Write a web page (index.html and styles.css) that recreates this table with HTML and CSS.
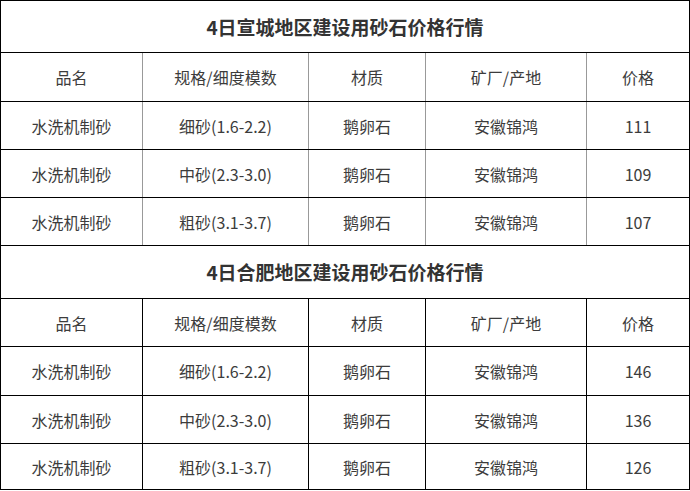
FILE: index.html
```html
<!DOCTYPE html>
<html lang="zh-CN">
<head>
<meta charset="utf-8">
<title>砂石价格行情</title>
<link rel="stylesheet" href="styles.css">
</head>
<body>
<table class="price-table">
  <colgroup>
    <col class="c1"><col class="c2"><col class="c3"><col class="c4"><col class="c5">
  </colgroup>
  <tbody class="sec sec-gray">
    <tr class="title-row"><td colspan="5">4日宣城地区建设用砂石价格行情</td></tr>
    <tr class="row head-row"><td>品名</td><td>规格/细度模数</td><td>材质</td><td>矿厂/产地</td><td>价格</td></tr>
    <tr class="row"><td>水洗机制砂</td><td>细砂(1.6-2.2)</td><td>鹅卵石</td><td>安徽锦鸿</td><td>111</td></tr>
    <tr class="row"><td>水洗机制砂</td><td>中砂(2.3-3.0)</td><td>鹅卵石</td><td>安徽锦鸿</td><td>109</td></tr>
    <tr class="row"><td>水洗机制砂</td><td>粗砂(3.1-3.7)</td><td>鹅卵石</td><td>安徽锦鸿</td><td>107</td></tr>
  </tbody>
  <tbody class="sec sec-black">
    <tr class="title-row title-second"><td colspan="5">4日合肥地区建设用砂石价格行情</td></tr>
    <tr class="row"><td>品名</td><td>规格/细度模数</td><td>材质</td><td>矿厂/产地</td><td>价格</td></tr>
    <tr class="row head-row"><td>水洗机制砂</td><td>细砂(1.6-2.2)</td><td>鹅卵石</td><td>安徽锦鸿</td><td>146</td></tr>
    <tr class="row"><td>水洗机制砂</td><td>中砂(2.3-3.0)</td><td>鹅卵石</td><td>安徽锦鸿</td><td>136</td></tr>
    <tr class="row last-row"><td>水洗机制砂</td><td>粗砂(3.1-3.7)</td><td>鹅卵石</td><td>安徽锦鸿</td><td>126</td></tr>
  </tbody>
</table>
</body>
</html>
```

FILE: styles.css
```css
html, body {
  margin: 0;
  padding: 0;
  background: #fff;
}

.price-table {
  border-collapse: collapse;
  table-layout: fixed;
  width: 689px;
  font-family: "Microsoft YaHei", "Noto Sans CJK SC", "Noto Sans", sans-serif;
  color: #3c3c3c;
  font-size: 16px;
}

.c1 { width: 142px; }
.c2 { width: 166px; }
.c3 { width: 117px; }
.c4 { width: 161px; }
.c5 { width: 103px; }

.price-table td {
  border: 1px solid #000;
  padding: 0;
  text-align: center;
  vertical-align: middle;
  line-height: 20px;
}

.sec-gray .row td:not(:first-child) {
  border-left-color: #999;
}

.sec-gray .row td:not(:last-child) {
  border-right-color: #999;
}

.title-row td {
  height: 51px;
  font-size: 19px;
  font-weight: bold;
  color: #333;
}

.title-second td {
  height: 52px;
}

.row td {
  height: 47px;
}

.head-row td {
  height: 48px;
}

.last-row td {
  height: 45px;
}
```
